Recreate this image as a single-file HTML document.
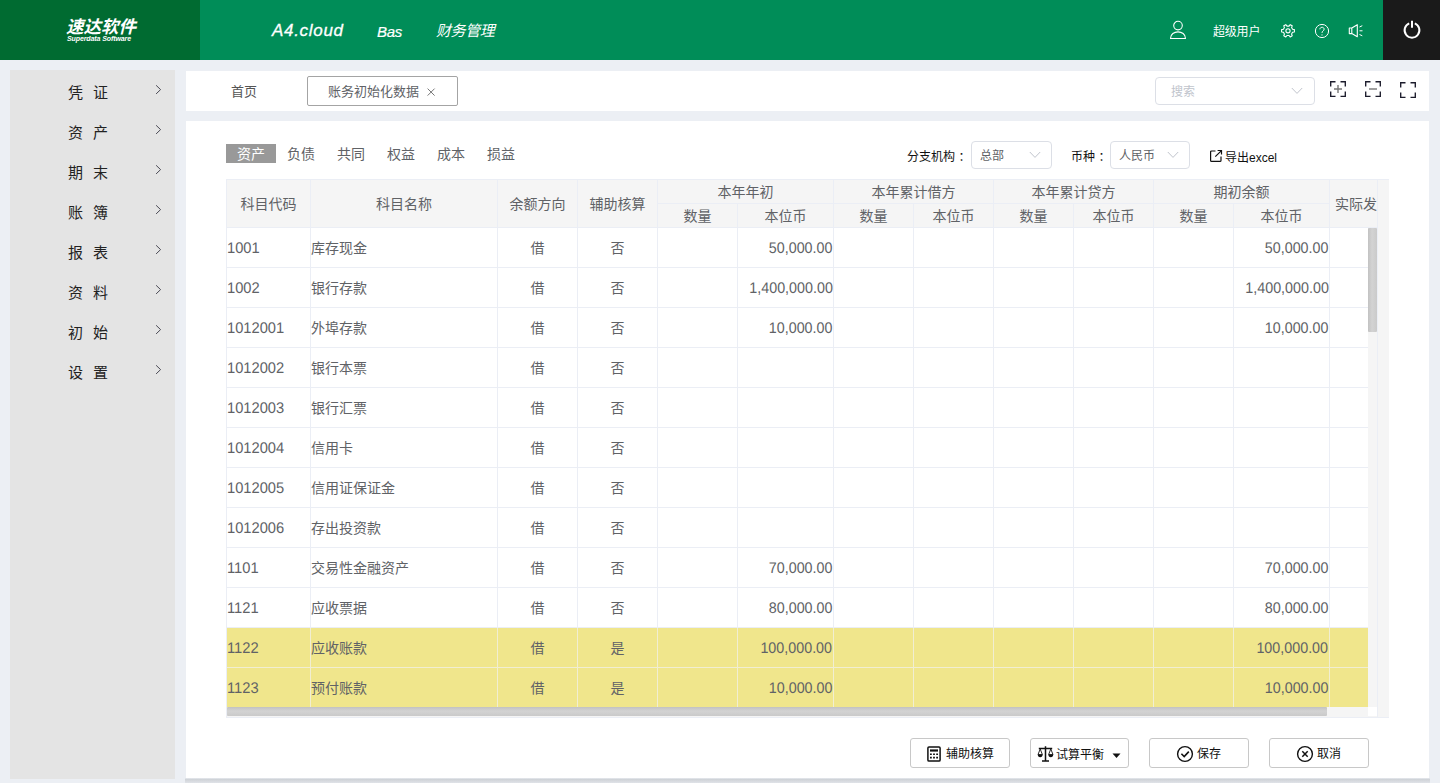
<!DOCTYPE html>
<html lang="zh-CN">
<head>
<meta charset="utf-8">
<title>账务初始化数据</title>
<style>
*{box-sizing:border-box;margin:0;padding:0}
html,body{width:1440px;height:783px;overflow:hidden}
body{background:#eceff4;font-family:"Liberation Sans","Noto Sans CJK SC",sans-serif;font-size:14px;color:#606266;position:relative}
.abs{position:absolute}
/* header */
#hdr{position:absolute;left:0;top:0;width:1440px;height:60px;background:#008d58}
#logo{position:absolute;left:0;top:0;width:200px;height:60px;background:#006b31;color:#fff}
#logo .cn{position:absolute;left:66px;top:16px;font-size:17.5px;font-weight:bold;font-style:italic;line-height:22px;letter-spacing:0px;white-space:nowrap}
#logo .en{position:absolute;left:67px;top:35.3px;font-size:7px;font-weight:bold;font-style:italic;line-height:8px;white-space:nowrap;letter-spacing:-0.1px}
.nav{position:absolute;top:0;height:60px;line-height:60px;color:#fff;font-style:italic;white-space:nowrap}
#pwr{position:absolute;left:1383px;top:0;width:57px;height:60px;background:#1a1a1a}
.user{position:absolute;left:1213px;top:23px;font-size:12px;color:#fff;line-height:18px;white-space:nowrap;letter-spacing:-0.2px}
/* sidebar */
#side{position:absolute;left:10px;top:70px;width:165px;height:709px;background:#e4e4e4}
#side .it{position:absolute;left:0;width:165px;height:40px;line-height:40px;color:#222;font-size:15px}
#side .it span{position:absolute;left:58px;top:3px;letter-spacing:10px;white-space:nowrap}
#side .it svg{position:absolute;left:145px;top:14.3px}
/* tabs */
#tabs{position:absolute;left:186px;top:71px;width:1243px;height:40px;background:#fff}
#panel{position:absolute;left:186px;top:121px;width:1243px;height:657px;background:#fff}
#shd{position:absolute;left:185px;top:778px;width:1245px;height:5px;background:linear-gradient(180deg,#e8ebf0 0,#cfd3d8 28%,#d8dbe0 65%,#e0e3e8 100%)}

/* panel content */
.ftab{position:absolute;top:23px;height:19px;line-height:21px;width:50px;text-align:center;font-size:14px;color:#606266;white-space:nowrap}
.ftab.on{background:#999;color:#fff}
.lbl{position:absolute;top:25.5px;font-size:12px;line-height:20px;color:#111;white-space:nowrap}
.sel{position:absolute;top:20px;height:28px;border:1px solid #dcdfe6;border-radius:4px;background:#fff;font-size:12px;line-height:28.6px;color:#606266;padding-left:8px;white-space:nowrap}
.sel svg{position:absolute;right:10.5px;top:9px}
#tw{position:absolute;left:40px;top:58px;width:1163px;height:539px;background:#f5f5f5;border-top:1px solid #ebeef5;border-left:1px solid #ebeef5;border-bottom:1px solid #ebeef5;overflow:hidden}
#tw .rb{position:absolute;left:1150px;top:0;width:1px;height:537px;background:#ebeef5}
#tclip{position:absolute;left:0;top:0;width:1150px;height:527px;overflow:hidden;background:#fff}
table{border-collapse:separate;border-spacing:0;table-layout:fixed;width:1223px}
th,td{border-right:1px solid #ebeef5;border-bottom:1px solid #ebeef5;font-weight:normal;font-size:14px;color:#606266;text-align:center;white-space:nowrap;overflow:hidden;padding:0}
th{background:#f5f5f5;height:24px;line-height:21px;padding-top:2px}
td{height:40px;line-height:37px;padding-top:2px;background:#fff}
td.l{text-align:left;padding-left:0}
.d{display:inline-block;font-size:15.4px;text-rendering:geometricPrecision;transform:scaleX(.93);transform-origin:100% 50%;position:relative;top:0;line-height:20px;vertical-align:middle}
td.l .d{transform-origin:0 50%;left:-0.3px;transform:scaleX(.955)}
td.r .d{left:-0.5px}
td.r{text-align:right;padding-right:0}
tr.hl td{background:#f0e68c;border-color:#f1eed2}
#vs{position:absolute;left:1141px;top:48px;width:9px;height:479px;background:#f5f5f5}
#vs i{position:absolute;left:0;top:0;width:9px;height:104px;background:linear-gradient(90deg,#c2c2c2,#d3d3d3 45%,#cacaca);border-radius:1px}
#hs{position:absolute;left:0;top:527px;width:1141px;height:10px;background:#f5f5f5}
#hs i{position:absolute;left:0;top:0;width:1100px;height:9px;background:linear-gradient(180deg,#c2c2c2,#d3d3d3 45%,#cacaca);border-radius:1px}
#cn{position:absolute;left:1141px;top:527px;width:9px;height:9px;background:#fff}
.btn{position:absolute;top:617px;height:30px;border:1px solid #c8c8c8;border-radius:3px;background:#fff;font-size:12px;color:#111;line-height:28px;white-space:nowrap}
</style>
</head>
<body>
<div id="hdr">
  <div id="logo"><div class="cn">速达软件</div><div class="en">Superdata Software</div></div>
  <div class="nav" style="left:272px;top:1px;font-size:17px;letter-spacing:0.7px;-webkit-text-stroke:0.3px #fff">A4.cloud</div>
  <div class="nav" style="left:377px;top:1.5px;font-size:15px;letter-spacing:-0.3px;-webkit-text-stroke:0.2px #fff">Bas</div>
  <div class="nav" style="left:436px;top:1px;font-size:15px;letter-spacing:-0.4px">财务管理</div>
  <div class="user">超级用户</div>

  <svg class="abs" style="left:1168px;top:19px" width="20" height="22" viewBox="0 0 20 22" fill="none" stroke="#fff" stroke-width="1.1"><circle cx="10" cy="6.6" r="4.3"/><path d="M2.5 19.5 C2.5 10.6 17.5 10.6 17.5 19.5 Z" stroke-linejoin="round"/></svg>
  <svg class="abs" style="left:1280px;top:23px" width="16" height="16" viewBox="0 0 16 16" fill="none" stroke="#fff" stroke-width="1.1" stroke-linejoin="round"><circle cx="8" cy="7.8" r="2.1"/><path transform="translate(0,-0.2)" d="M14.40 6.85 L14.40 9.15 L12.57 9.48 L11.57 11.21 L12.20 12.96 L10.20 14.12 L9.00 12.70 L7.00 12.70 L5.80 14.12 L3.80 12.96 L4.43 11.21 L3.43 9.48 L1.60 9.15 L1.60 6.85 L3.43 6.52 L4.43 4.79 L3.80 3.04 L5.80 1.88 L7.00 3.30 L9.00 3.30 L10.20 1.88 L12.20 3.04 L11.57 4.79 L12.57 6.52 Z"/></svg>
  <svg class="abs" style="left:1314px;top:23px" width="16" height="16" viewBox="0 0 16 16" fill="none" stroke="#fff" stroke-width="1"><circle cx="8" cy="8" r="6.6"/><path d="M5.9 6.3 C5.9 3.6 10.1 3.6 10.1 6.2 C10.1 8 8 7.9 8 9.9" stroke-width="1"/><circle cx="8" cy="11.9" r="0.6" fill="#fff" stroke="none"/></svg>
  <svg class="abs" style="left:1348px;top:23px" width="16" height="16" viewBox="0 0 16 16" fill="none" stroke="#fff" stroke-width="1.1" stroke-linejoin="round"><path d="M1.3 5 H3.8 L9.3 1.7 V13.8 L3.8 10.6 H1.3 Z M3.8 5 V10.6"/><path d="M11.5 4 L14.3 2.7 M11.5 7.8 H14.5 M11.5 11.5 L14.3 12.8" stroke-width="1"/></svg>
  <div id="pwr"><svg class="abs" style="left:17.5px;top:19.2px" width="22" height="22" viewBox="0 0 22 22" fill="none" stroke="#fff" stroke-width="2"><path d="M8.2 4.4 A7.4 7.4 0 1 0 13.8 4.4"/><path d="M11 1.8 V8.8"/></svg></div>
</div>
<div id="side">
  <div class="it" style="top:0"><span>凭证</span><svg width="8" height="12" viewBox="0 0 8 12" fill="none" stroke="#4a4a55" stroke-width="1"><path d="M1.1 1.3 L5.6 5.6 L1.1 9.9"/></svg></div>
  <div class="it" style="top:40px"><span>资产</span><svg width="8" height="12" viewBox="0 0 8 12" fill="none" stroke="#4a4a55" stroke-width="1"><path d="M1.1 1.3 L5.6 5.6 L1.1 9.9"/></svg></div>
  <div class="it" style="top:80px"><span>期末</span><svg width="8" height="12" viewBox="0 0 8 12" fill="none" stroke="#4a4a55" stroke-width="1"><path d="M1.1 1.3 L5.6 5.6 L1.1 9.9"/></svg></div>
  <div class="it" style="top:120px"><span>账簿</span><svg width="8" height="12" viewBox="0 0 8 12" fill="none" stroke="#4a4a55" stroke-width="1"><path d="M1.1 1.3 L5.6 5.6 L1.1 9.9"/></svg></div>
  <div class="it" style="top:160px"><span>报表</span><svg width="8" height="12" viewBox="0 0 8 12" fill="none" stroke="#4a4a55" stroke-width="1"><path d="M1.1 1.3 L5.6 5.6 L1.1 9.9"/></svg></div>
  <div class="it" style="top:200px"><span>资料</span><svg width="8" height="12" viewBox="0 0 8 12" fill="none" stroke="#4a4a55" stroke-width="1"><path d="M1.1 1.3 L5.6 5.6 L1.1 9.9"/></svg></div>
  <div class="it" style="top:240px"><span>初始</span><svg width="8" height="12" viewBox="0 0 8 12" fill="none" stroke="#4a4a55" stroke-width="1"><path d="M1.1 1.3 L5.6 5.6 L1.1 9.9"/></svg></div>
  <div class="it" style="top:280px"><span>设置</span><svg width="8" height="12" viewBox="0 0 8 12" fill="none" stroke="#4a4a55" stroke-width="1"><path d="M1.1 1.3 L5.6 5.6 L1.1 9.9"/></svg></div>
</div>
<div id="shd"></div>
<div id="tabs">
<div class="abs" style="left:45px;top:11px;font-size:13px;line-height:20px;color:#555;white-space:nowrap">首页</div>
<div class="abs" style="left:121px;top:5px;width:151px;height:30px;border:1px solid #a4a4a4;border-radius:2px"></div>
<div class="abs" style="left:142px;top:11px;font-size:13px;line-height:20px;color:#606266;white-space:nowrap">账务初始化数据</div>
<svg class="abs" style="left:240px;top:16px" width="10" height="10" viewBox="0 0 10 10" stroke="#777" stroke-width="1"><path d="M1.6 1.6 L8.6 8.6 M8.6 1.6 L1.6 8.6"/></svg>
<div class="abs" style="left:969px;top:6px;width:160px;height:28px;border:1px solid #dcdfe6;border-radius:4px"></div>
<div class="abs" style="left:985px;top:11.3px;font-size:12px;line-height:20px;color:#c0c4cc;white-space:nowrap">搜索</div>
<svg class="abs" style="left:1105px;top:16px" width="12" height="8" viewBox="0 0 12 8" fill="none" stroke="#c0c4cc" stroke-width="1"><path d="M0.8 1 L6 6.4 L11.2 1"/></svg>
<svg class="abs" style="left:1143px;top:9px" width="18" height="18" viewBox="0 0 18 18" fill="none" stroke="#1c1c2c" stroke-width="1.35"><path d="M1.7 6.5 V1.7 H6.5 M11.5 1.7 H16.3 V6.5 M16.3 11.5 V16.3 H11.5 M6.5 16.3 H1.7 V11.5"/><path d="M5 9 H13 M9 5 V13" stroke="#777" stroke-width="1.4"/></svg>
<svg class="abs" style="left:1178px;top:9px" width="18" height="18" viewBox="0 0 18 18" fill="none" stroke="#1c1c2c" stroke-width="1.35"><path d="M1.7 6.5 V1.7 H6.5 M11.5 1.7 H16.3 V6.5 M16.3 11.5 V16.3 H11.5 M6.5 16.3 H1.7 V11.5"/><path d="M5 9 H13" stroke="#888" stroke-width="1.6"/></svg>
<svg class="abs" style="left:1213px;top:10px" width="18" height="18" viewBox="0 0 18 18" fill="none" stroke="#1c1c2c" stroke-width="1.35"><path d="M1.7 6.5 V1.7 H6.5 M11.5 1.7 H16.3 V6.5 M16.3 11.5 V16.3 H11.5 M6.5 16.3 H1.7 V11.5"/></svg>
</div>
<div id="panel">
<div class="ftab on" style="left:40px">资产</div>
<div class="ftab" style="left:90px">负债</div>
<div class="ftab" style="left:140px">共同</div>
<div class="ftab" style="left:190px">权益</div>
<div class="ftab" style="left:240px">成本</div>
<div class="ftab" style="left:290px">损益</div>
<div class="lbl" style="left:721px">分支机构<span style="margin-left:3.5px">：</span></div>
<div class="sel" style="left:785px;width:81px">总部<svg width="12" height="8" viewBox="0 0 12 8" fill="none" stroke="#c0c4cc" stroke-width="1"><path d="M0.8 1 L6 6.4 L11.2 1"/></svg></div>
<div class="lbl" style="left:885px">币种<span style="margin-left:3.5px">：</span></div>
<div class="sel" style="left:924px;width:80px">人民币<svg width="12" height="8" viewBox="0 0 12 8" fill="none" stroke="#c0c4cc" stroke-width="1"><path d="M0.8 1 L6 6.4 L11.2 1"/></svg></div>
<svg class="abs" style="left:1022.7px;top:28.3px" width="14" height="14" viewBox="0 0 14 14" fill="none" stroke="#111" stroke-width="1.2"><path d="M6.5 2 H2.6 Q1.6 2 1.6 3 V11.4 Q1.6 12.4 2.6 12.4 H11 Q12 12.4 12 11.4 V7.5"/><path d="M6.3 7.7 L12.2 1.8 M8.6 1.5 H12.5 V5.4"/></svg><div class="lbl" style="left:1039px;top:26.5px">导出excel</div>
<div id="tw">
<div id="tclip">
<table>
<colgroup><col style="width:84px"><col style="width:187px"><col style="width:80px"><col style="width:80px"><col style="width:80px"><col style="width:96px"><col style="width:80px"><col style="width:80px"><col style="width:80px"><col style="width:80px"><col style="width:80px"><col style="width:96px"><col style="width:120px"></colgroup>
<thead>
<tr><th rowspan="2">科目代码</th><th rowspan="2">科目名称</th><th rowspan="2">余额方向</th><th rowspan="2">辅助核算</th><th colspan="2">本年年初</th><th colspan="2">本年累计借方</th><th colspan="2">本年累计贷方</th><th colspan="2">期初余额</th><th rowspan="2" style="text-align:left;padding-left:5px">实际发生</th></tr>
<tr><th>数量</th><th>本位币</th><th>数量</th><th>本位币</th><th>数量</th><th>本位币</th><th>数量</th><th>本位币</th></tr>
</thead>
<tbody>
<tr><td class="l"><span class="d">1001</span></td><td class="l">库存现金</td><td>借</td><td>否</td><td></td><td class="r"><span class="d">50,000.00</span></td><td></td><td></td><td></td><td></td><td></td><td class="r"><span class="d">50,000.00</span></td><td></td></tr>
<tr><td class="l"><span class="d">1002</span></td><td class="l">银行存款</td><td>借</td><td>否</td><td></td><td class="r"><span class="d">1,400,000.00</span></td><td></td><td></td><td></td><td></td><td></td><td class="r"><span class="d">1,400,000.00</span></td><td></td></tr>
<tr><td class="l"><span class="d">1012001</span></td><td class="l">外埠存款</td><td>借</td><td>否</td><td></td><td class="r"><span class="d">10,000.00</span></td><td></td><td></td><td></td><td></td><td></td><td class="r"><span class="d">10,000.00</span></td><td></td></tr>
<tr><td class="l"><span class="d">1012002</span></td><td class="l">银行本票</td><td>借</td><td>否</td><td></td><td></td><td></td><td></td><td></td><td></td><td></td><td></td><td></td></tr>
<tr><td class="l"><span class="d">1012003</span></td><td class="l">银行汇票</td><td>借</td><td>否</td><td></td><td></td><td></td><td></td><td></td><td></td><td></td><td></td><td></td></tr>
<tr><td class="l"><span class="d">1012004</span></td><td class="l">信用卡</td><td>借</td><td>否</td><td></td><td></td><td></td><td></td><td></td><td></td><td></td><td></td><td></td></tr>
<tr><td class="l"><span class="d">1012005</span></td><td class="l">信用证保证金</td><td>借</td><td>否</td><td></td><td></td><td></td><td></td><td></td><td></td><td></td><td></td><td></td></tr>
<tr><td class="l"><span class="d">1012006</span></td><td class="l">存出投资款</td><td>借</td><td>否</td><td></td><td></td><td></td><td></td><td></td><td></td><td></td><td></td><td></td></tr>
<tr><td class="l"><span class="d">1101</span></td><td class="l">交易性金融资产</td><td>借</td><td>否</td><td></td><td class="r"><span class="d">70,000.00</span></td><td></td><td></td><td></td><td></td><td></td><td class="r"><span class="d">70,000.00</span></td><td></td></tr>
<tr><td class="l"><span class="d">1121</span></td><td class="l">应收票据</td><td>借</td><td>否</td><td></td><td class="r"><span class="d">80,000.00</span></td><td></td><td></td><td></td><td></td><td></td><td class="r"><span class="d">80,000.00</span></td><td></td></tr>
<tr class="hl"><td class="l"><span class="d">1122</span></td><td class="l">应收账款</td><td>借</td><td>是</td><td></td><td class="r"><span class="d">100,000.00</span></td><td></td><td></td><td></td><td></td><td></td><td class="r"><span class="d">100,000.00</span></td><td></td></tr>
<tr class="hl"><td class="l"><span class="d">1123</span></td><td class="l">预付账款</td><td>借</td><td>是</td><td></td><td class="r"><span class="d">10,000.00</span></td><td></td><td></td><td></td><td></td><td></td><td class="r"><span class="d">10,000.00</span></td><td></td></tr>
</tbody>
</table>
</div>
<div id="vs"><i></i></div>
<div id="hs"><i></i></div>
<div id="cn"></div><div class="rb"></div>
</div>
<div class="btn" style="left:724px;width:100px"><svg class="abs" style="left:15.8px;top:7px" width="14" height="16" viewBox="0 0 14 16" fill="none" stroke="#111" stroke-width="1.5"><rect x="0.9" y="0.9" width="12.2" height="14.2" rx="1.1"/><path d="M3 4.5 H11" stroke-width="2.2"/><path d="M3 8.2 h1.8 M6.1 8.2 h1.8 M9.2 8.2 h1.8 M3 11.6 h1.8 M6.1 11.6 h1.8 M9.2 11.6 h1.8" stroke-width="1.6"/></svg><span class="abs" style="left:35px;top:1px">辅助核算</span></div>
<div class="btn" style="left:844px;width:99px"><svg class="abs" style="left:6px;top:7px" width="17" height="16" viewBox="0 0 17 16" fill="none" stroke="#111" stroke-width="1.3"><path d="M8.5 0.3 V15 M5 15.1 H12 M1.8 2.4 H15.2" stroke-width="1.5"/><path d="M3.2 3 L1 8.6 H5.4 Z M13.8 3 L11.6 8.6 H16 Z" stroke-width="0.9" stroke-linejoin="round"/><path d="M0.8 8.6 A2.4 2.6 0 0 0 5.6 8.6 Z M11.4 8.6 A2.4 2.6 0 0 0 16.2 8.6 Z" fill="#111" stroke="none"/></svg><span class="abs" style="left:25px;top:2px">试算平衡</span><svg class="abs" style="left:80.5px;top:13.5px" width="9" height="6" viewBox="0 0 9 6"><path d="M0.5 0.5 H8.5 L4.5 5 Z" fill="#111"/></svg></div>
<div class="btn" style="left:963px;width:100px"><svg class="abs" style="left:26.2px;top:5.5px" width="18" height="18" viewBox="0 0 18 18" fill="none" stroke="#111" stroke-width="1.4"><circle cx="9" cy="9" r="7.4"/><path d="M5.4 8.8 L8.2 11.6 L12.8 6.6" stroke-width="1.6"/></svg><span class="abs" style="left:47px;top:1px">保存</span></div>
<div class="btn" style="left:1083px;width:100px"><svg class="abs" style="left:26px;top:5.5px" width="18" height="18" viewBox="0 0 18 18" fill="none" stroke="#111" stroke-width="1.4"><circle cx="9" cy="9" r="7.4"/><path d="M6.3 6.3 L11.7 11.7 M11.7 6.3 L6.3 11.7" stroke-width="1.5"/></svg><span class="abs" style="left:47px;top:1px">取消</span></div>
</div>
</body>
</html>
